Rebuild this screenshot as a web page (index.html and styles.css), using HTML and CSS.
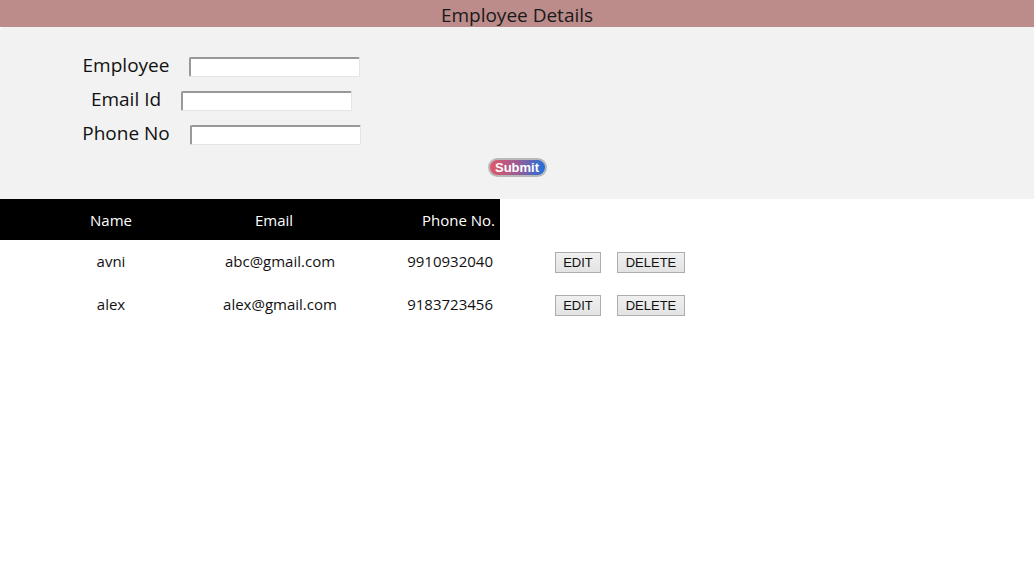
FILE: index.html
```html
<!DOCTYPE html>
<html>
<head>
<meta charset="utf-8">
<title>Employee Details</title>
<link rel="stylesheet" href="styles.css">
</head>
<body>
<header class="title-bar">Employee Details</header>
<section class="form-panel">
  <div class="fields">
    <div class="field field-emp"><label>Employee</label><input type="text"></div>
    <div class="field field-email"><label>Email Id</label><input type="text"></div>
    <div class="field field-phone"><label>Phone No</label><input type="text"></div>
  </div>
  <div class="submit-row"><button class="submit">Submit</button></div>
</section>
<section class="table">
  <div class="head-row">
    <div class="h-name">Name</div>
    <div class="h-email">Email</div>
    <div class="h-phone">Phone No.</div>
  </div>
  <div class="row">
    <div class="c-name">avni</div>
    <div class="c-email">abc@gmail.com</div>
    <div class="c-phone">9910932040</div>
    <div class="c-actions"><button class="btn btn-edit">EDIT</button><button class="btn btn-del">DELETE</button></div>
  </div>
  <div class="row">
    <div class="c-name">alex</div>
    <div class="c-email">alex@gmail.com</div>
    <div class="c-phone">9183723456</div>
    <div class="c-actions"><button class="btn btn-edit">EDIT</button><button class="btn btn-del">DELETE</button></div>
  </div>
</section>
</body>
</html>
```
FILE: styles.css
```css
* { box-sizing: border-box; }
body {
  margin: 0;
  font-family: "Open Sans", "Noto Sans", sans-serif;
  color: #111;
  background: #fff;
}
.title-bar {
  height: 27px;
  background: #bc8c8a;
  text-align: center;
  font-size: 19px;
  line-height: 31px;
  color: #1a1a1a;
}
.form-panel {
  background: #f2f2f2;
  height: 172px;
  border-top-left-radius: 4px;
  padding-top: 30px;
}
.fields {
  width: 443px;
  display: flex;
  flex-direction: column;
  align-items: center;
  gap: 14px;
}
.field {
  display: flex;
  align-items: center;
  height: 20px;
  font-size: 19px;
}
.field label { margin-right: 20px; margin-bottom: 4px; }
.field input {
  width: 171px;
  height: 20px;
  border: 1px solid #e4e4e4;
  border-top: 2px solid #989898;
  border-left: 2px solid #989898;
  border-radius: 2px;
  background: #fff;
  padding: 0;
}
.submit-row {
  display: flex;
  justify-content: center;
  margin-top: 13px;
}
.submit {
  width: 59px;
  height: 19px;
  border-radius: 10px;
  border: 2px solid #b8b8b8;
  background: linear-gradient(to right, #e35766, #9a5c94 50%, #1f70dd);
  color: #fff;
  font-family: "Liberation Sans", Arial, sans-serif;
  font-size: 13px;
  font-weight: bold;
  padding: 0;
  line-height: 15px;
}
.table { font-size: 15px; }
.head-row {
  width: 500px;
  height: 41px;
  background: #000;
  color: #fff;
  display: grid;
  grid-template-columns: 222px 104px 174px;
  align-items: center;
  padding-top: 1px;
}
.h-name, .h-email { text-align: center; }
.h-phone { text-align: right; padding-right: 5px; }
.row {
  height: 43px;
  display: grid;
  grid-template-columns: 222px 116px 155px 62px auto;
  align-items: center;
  padding-top: 1px;
}
.c-name, .c-email { text-align: center; padding-bottom: 2px; }
.c-phone { text-align: right; padding-bottom: 2px; }
.c-actions { grid-column: 5; display: flex; gap: 16px; }
.btn {
  height: 21px;
  border: 1px solid #adadad;
  background: linear-gradient(#f0f0f0, #e3e3e3);
  font-family: "Liberation Sans", Arial, sans-serif;
  font-size: 13px;
  color: #111;
  padding: 0 7px;
  border-radius: 0;
}
.btn-edit { width: 46px; }
.btn-del { width: 68px; }
```
